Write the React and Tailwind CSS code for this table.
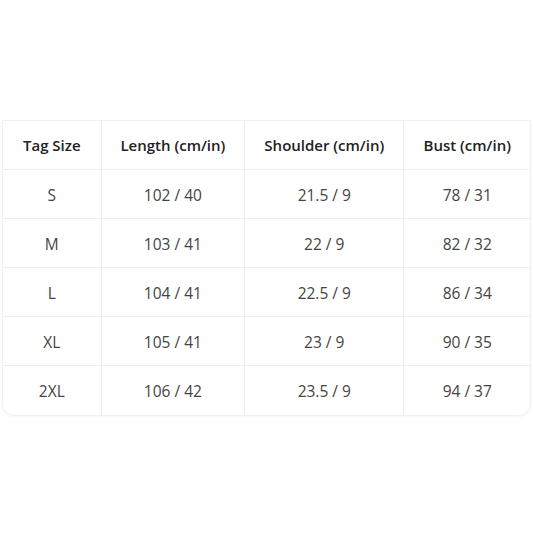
const header = ['Tag Size', 'Length (cm/in)', 'Shoulder (cm/in)', 'Bust (cm/in)']
const rows = [
  ['S', '102 / 40', '21.5 / 9', '78 / 31'],
  ['M', '103 / 41', '22 / 9', '82 / 32'],
  ['L', '104 / 41', '22.5 / 9', '86 / 34'],
  ['XL', '105 / 41', '23 / 9', '90 / 35'],
  ['2XL', '106 / 42', '23.5 / 9', '94 / 37'],
]
const widths = ['w-[99px]', 'w-[144px]', 'w-[160px]', 'w-[126px]']

export default function App() {
  return (
    <div className="w-[533px] h-[533px] bg-white flex flex-col pt-[120px] pl-[2px]" style={{ fontFamily: '"Open Sans", "Noto Sans", sans-serif' }}>
      <div className="w-[529px] rounded-b-[12px] border border-[#f0f0f0] overflow-hidden shadow-[0_1px_3px_rgba(0,0,0,0.04)]">
        <div className="flex h-[49px] border-b border-[#eeeeee]">
          {header.map((h, i) => (
            <div key={h} className={`${widths[i]} flex items-center justify-center text-[15px] font-semibold text-[#222] ${i < 3 ? 'border-r border-[#eeeeee]' : ''}`}>
              {h}
            </div>
          ))}
        </div>
        {rows.map((r, ri) => (
          <div key={r[0]} className={`flex h-[49px] ${ri < rows.length - 1 ? 'border-b border-[#eeeeee]' : ''}`}>
            {r.map((c, i) => (
              <div key={i} className={`${widths[i]} flex items-center justify-center pt-[3px] text-[15.5px] text-[#444] ${i < 3 ? 'border-r border-[#eeeeee]' : ''}`}>
                {c}
              </div>
            ))}
          </div>
        ))}
      </div>
    </div>
  )
}
